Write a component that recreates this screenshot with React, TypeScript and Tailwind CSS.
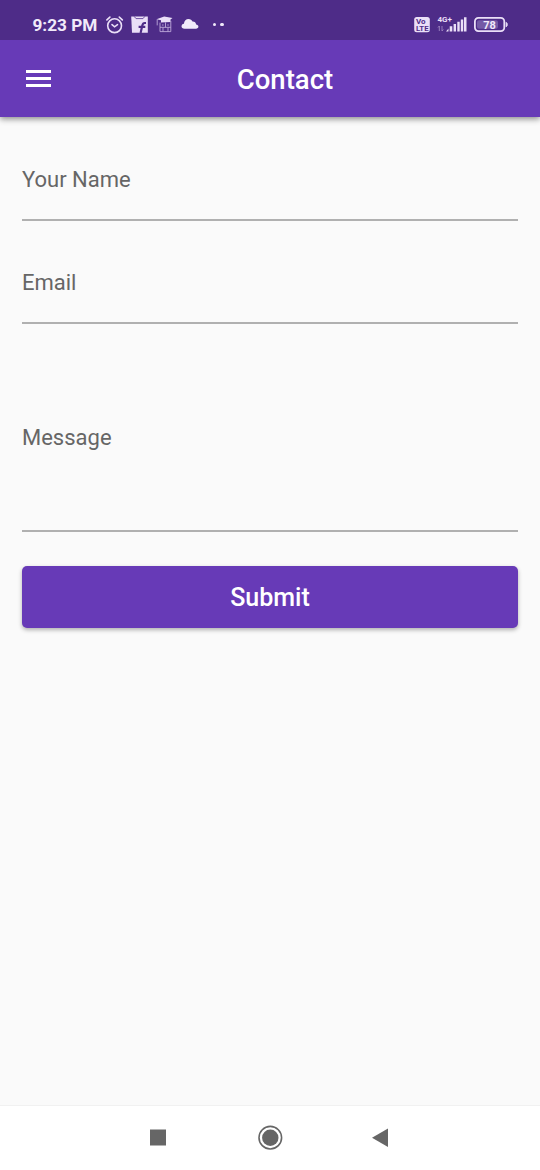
import React from "react";

function AlarmIcon() {
  return (
    <svg width="18" height="18" viewBox="0 0 18 18" fill="none" stroke="#eadff7" strokeWidth="1.6" strokeLinecap="round">
      <circle cx="8.6" cy="9.7" r="6.9" />
      <path d="M.9 3.9 3.9 1.1M16.3 3.9 13.3 1.1" />
      <path d="M6 8.6 8.6 10.8l2.9-2.1" />
    </svg>
  );
}

function ShopIcon() {
  return (
    <svg width="17" height="18" viewBox="0 0 17 18">
      <path d="M.2.5h16.6v16.2H1Z" fill="#eadff7" />
      <path d="M3 .2 5 2.6h7L14 .2" stroke="#6e50a0" strokeWidth="1" fill="none" />
      <path d="M15 7h-1.3c-1.6 0-2 .8-2.4 2.5L9.6 17M7.6 10.8h6.7" stroke="#4e2c88" strokeWidth="2.2" fill="none" />
    </svg>
  );
}

function GraduateIcon() {
  return (
    <svg width="18" height="18" viewBox="0 0 18 18" fill="none" stroke="#bda9da" strokeWidth=".9">
      <path d="M.5 3.3 8.2.5l8.3 1.6-2 1.5V6L5 6.6V4.2Z" fill="#eadff7" stroke="none" />
      <path d="M1.2 3.6v5.8M4 6.6v9h10.8V5M4 11.3h10.8M9.5 6.4v5M6 9h1.6M11.2 9h1.6M7 11.3v4.3M12 11.3v4.3" />
    </svg>
  );
}

function CloudIcon() {
  return (
    <svg width="18" height="12" viewBox="0 0 18 12">
      <path d="M3.5 10.8C1.7 10.8.5 9.8.5 8.3c0-1.4 1-2.4 2.4-2.6C3.2 2.9 5.1 1 7.5 1c2 0 3.3 1 4 2.6 2.1-.1 3.4 1 3.6 2.8 1.3.1 2.3.9 2.3 2.2s-1 2.2-2.4 2.2Z" fill="#f1eafa" />
    </svg>
  );
}

function VolteIcon() {
  return (
    <svg width="16" height="16" viewBox="0 0 16 16">
      <rect x=".2" y="0" width="15.6" height="15.2" rx="2.5" fill="#eadff7" />
      <g fill="#4e2c88" fontFamily="Roboto, sans-serif" fontWeight="700" fontSize="8">
        <text x="2" y="7">Vo</text>
        <text x="2" y="14" textLength="12.5" lengthAdjust="spacingAndGlyphs">LTE</text>
      </g>
    </svg>
  );
}

function SignalIcon() {
  return (
    <svg width="30" height="18" viewBox="0 0 30 18">
      <text x=".5" y="6.4" fill="#eadff7" fontFamily="Roboto, sans-serif" fontWeight="700" fontSize="8" textLength="14.5" lengthAdjust="spacingAndGlyphs">4G+</text>
      <path d="M2.3 15v-5L1 11.5M5 10v5L6.3 13.5" stroke="#a890c9" strokeWidth=".8" fill="none" />
      <path d="M9 15.5l2.5-3v3ZM12.7 10.3h2.6v5.2h-2.6ZM16.6 8h2.4v7.5h-2.4ZM20.3 5.7h2.4v9.8h-2.4ZM23.8 3.4h2.4v12.1h-2.4ZM27 1.2h2.5v14.3H27Z" fill="#eadff7" />
    </svg>
  );
}

function BatteryIcon() {
  return (
    <svg width="35" height="16" viewBox="0 0 35 16">
      <rect x="3" y="3.3" width="21" height="8.4" rx="2" fill="#745aa6" />
      <rect x=".9" y=".9" width="29.4" height="13.2" rx="3.5" fill="none" stroke="#eadff7" strokeWidth="1.8" />
      <path d="M32.2 5.4c1.4.5 1.4 3.8 0 4.3Z" fill="#eadff7" stroke="#eadff7" />
      <text x="9.3" y="11.7" textLength="12.6" lengthAdjust="spacingAndGlyphs" fill="#f1eafa" fontFamily="Roboto, sans-serif" fontWeight="700" fontSize="11.5">78</text>
    </svg>
  );
}

function StatusBar() {
  return (
    <div className="flex h-10 items-center bg-[#4e2c88] pt-[9px] pr-[31px] pl-[32.5px] text-[#f1eafa]">
      <span className="w-[73px] text-[17.2px] leading-5 font-bold whitespace-nowrap">9:23 PM</span>
      <AlarmIcon />
      <div className="ml-[7.5px]"><ShopIcon /></div>
      <div className="ml-2"><GraduateIcon /></div>
      <div className="mb-0.5 ml-[6.5px]"><CloudIcon /></div>
      <div className="ml-[14px] flex gap-[4px]">
        <span className="size-[3.5px] rounded-full bg-[#f1eafa]" />
        <span className="size-[3.5px] rounded-full bg-[#f1eafa]" />
      </div>
      <div className="ml-auto flex items-center">
        <VolteIcon />
        <div className="ml-[7px]"><SignalIcon /></div>
        <div className="ml-[7px]"><BatteryIcon /></div>
      </div>
    </div>
  );
}

function Field({ label, className }: { label: string; className: string }) {
  return (
    <label className={`flex items-center border-b-2 border-[#b0b0b0] text-[22px] leading-7 text-[#666] ${className}`}>
      {label}
    </label>
  );
}

export default function App() {
  return (
    <div className="flex h-[1170px] w-[540px] flex-col bg-[#fafafa] font-[Roboto,sans-serif]">
      <header className="shadow-[0_2px_6px_rgba(0,0,0,0.45)]">
        <StatusBar />
        <div className="grid h-[77px] grid-cols-[1fr_auto_1fr] items-center bg-[#673ab7] pl-[26px] text-white">
          <button className="flex w-[25px] flex-col gap-1" aria-label="Menu">
            <span className="h-[3px] w-full bg-white" />
            <span className="h-[3px] w-full bg-white" />
            <span className="h-[3px] w-full bg-white" />
          </button>
          <h1 className="pt-0.5 pl-1 text-[27.5px] leading-8 font-medium">Contact</h1>
        </div>
      </header>
      <main className="flex flex-1 flex-col px-[22px] pt-[21px]">
        <Field label="Your Name" className="h-[83px] pt-[2px]" />
        <Field label="Email" className="mt-5 h-[83px] pt-[2px]" />
        <Field label="Message" className="mt-5 h-[188px] pt-[2px]" />
        <button className="mt-[34px] h-[62px] rounded-[5px] bg-[#673ab7] pt-0.5 text-[25px] font-medium text-white shadow-[0_2px_4px_rgba(0,0,0,0.3)]">
          Submit
        </button>
      </main>
      <nav className="flex h-[65px] items-center justify-center border-t border-[#f1f1f1] bg-white">
        <svg width="240" height="28" viewBox="0 0 240 28" fill="#666">
          <rect x="0" y="5.5" width="16" height="16" />
          <circle cx="120.3" cy="13.7" r="11.3" fill="none" stroke="#666" strokeWidth="1.6" />
          <circle cx="120.3" cy="13.7" r="8.2" />
          <path d="M238 4.5v18.5L222 13.7Z" />
        </svg>
      </nav>
    </div>
  );
}
